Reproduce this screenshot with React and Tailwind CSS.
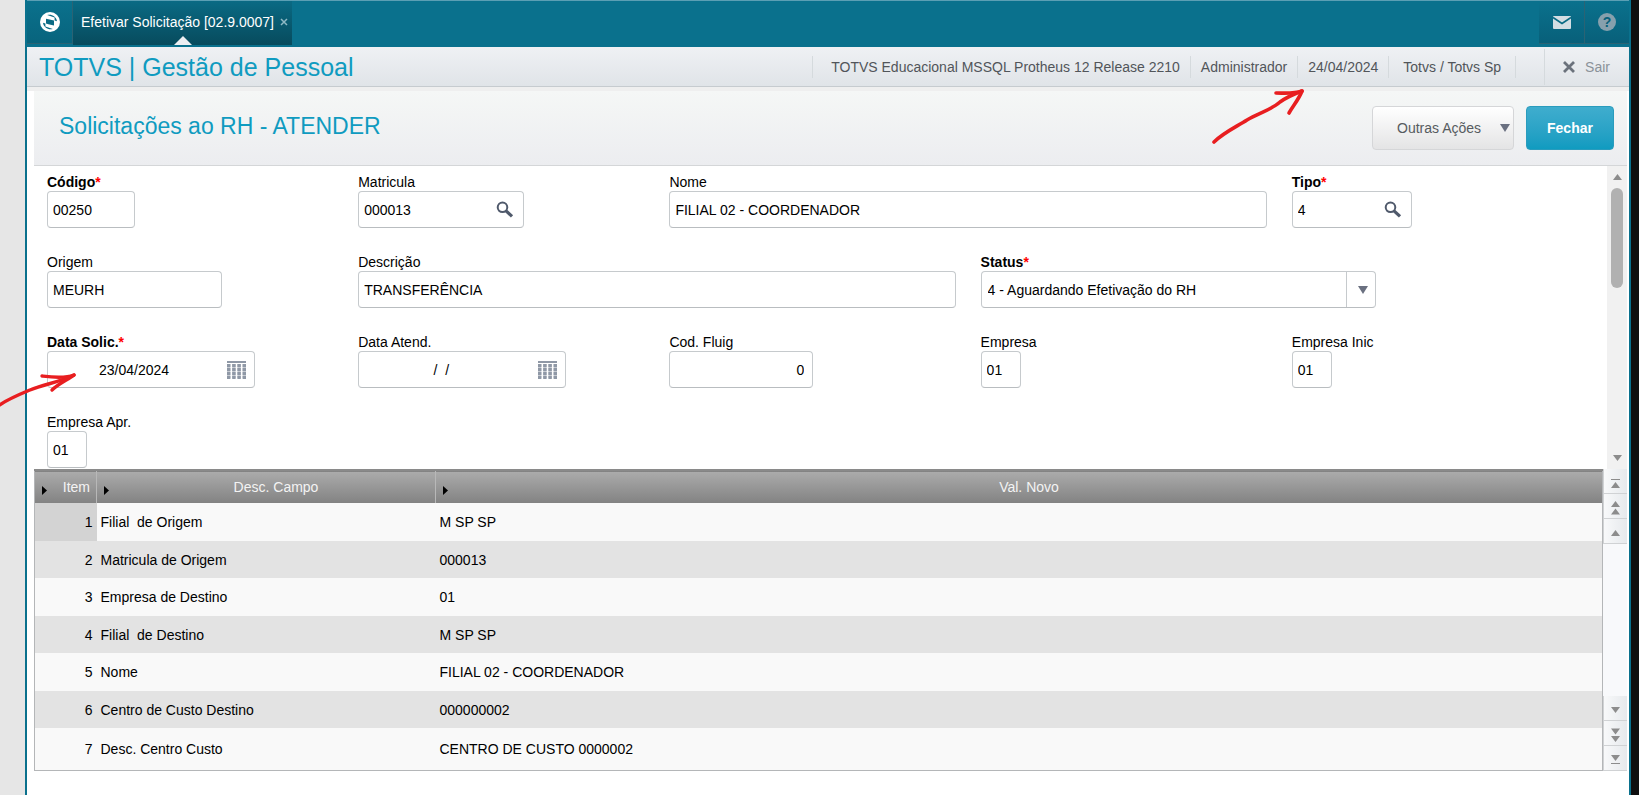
const FONT = "font-['Liberation_Sans',Arial,sans-serif]"

const rows = [
  { item: 1, desc: 'Filial  de Origem', value: 'M SP SP' },
  { item: 2, desc: 'Matricula de Origem', value: '000013' },
  { item: 3, desc: 'Empresa de Destino', value: '01' },
  { item: 4, desc: 'Filial  de Destino', value: 'M SP SP' },
  { item: 5, desc: 'Nome', value: 'FILIAL 02 - COORDENADOR' },
  { item: 6, desc: 'Centro de Custo Destino', value: '000000002' },
  { item: 7, desc: 'Desc. Centro Custo', value: 'CENTRO DE CUSTO 0000002' }
]

function TotvsLogo() {
  return (
    <svg width="20" height="20" viewBox="0 0 20 20" aria-hidden="true">
      <circle cx="10" cy="10" r="10" fill="#fff" />
      <g fill="#0a6a84">
        <path d="M6 6.8 L11.8 8 L14 8.5 V13.4 L8.4 12.2 L6 11.6 Z" />
        <path d="M7.2 3 C11.5 1.8 16.4 4.4 17 9.2 L14.6 8.6 V5.4 Z" />
        <path d="M12.8 17 C8.5 18.2 3.6 15.6 3 10.8 L5.4 11.4 V14.6 Z" />
      </g>
    </svg>
  )
}

function SearchIcon() {
  return (
    <svg width="18" height="18" viewBox="0 0 18 18" fill="none" aria-hidden="true">
      <circle cx="6.5" cy="6.3" r="4.8" stroke="#4f596b" strokeWidth="2" />
      <path d="M10 9.8 L16 15.4" stroke="#4f596b" strokeWidth="3.2" />
    </svg>
  )
}

function CalendarIcon() {
  return (
    <svg width="19" height="18" viewBox="0 0 19 18" fill="#8f98a6" aria-hidden="true">
      <rect x="0" y="0" width="19" height="2" />
      {[0, 1, 2, 3].map(col =>
        [0, 1, 2, 3].map(row => (
          <rect key={`${col}-${row}`} x={col * 5.2} y={3 + row * 4} width="3.4" height="3" />
        ))
      )}
      <path d="M0 3h3.4v14h-3.4z M5.2 3h3.4v14h-3.4z M10.4 3h3.4v14h-3.4z M15.6 3h3.4v14h-3.4z" opacity="0.5" />
    </svg>
  )
}

function Caret({ up, double, bar, large, color = '#8c8c8c' }) {
  const shape = double ? 'M0 6 L4.5 0 L9 6 Z M0 13.5 L4.5 7.5 L9 13.5 Z' : 'M0 6 L4.5 0 L9 6 Z'
  const h = double ? 14 : 6
  return (
    <svg
      width={large ? 10 : 9}
      height={bar ? 9 : large ? 8 : h}
      viewBox={bar ? '0 -3 9 9' : `0 0 9 ${h}`}
      preserveAspectRatio="none"
      fill={color}
      className={up ? 'shrink-0' : 'shrink-0 rotate-180'}
      aria-hidden="true"
    >
      {bar && <path d="M0 -3h9v1h-9z" />}
      <path d={shape} />
    </svg>
  )
}

function Field({ id, label, required, span, width, value, align = 'text-left px-[5px]', icon, action }) {
  return (
    <div className={span ? 'col-span-2' : ''}>
      <label htmlFor={id} className={`block h-4 text-sm leading-[14px] ${required ? 'font-bold' : ''}`}>
        {label}
        {required && <span className="text-[#ff0000]">*</span>}
      </label>
      <div className={`flex h-[37px] rounded border border-[#c6cacd] border-b-[#b9bdc0] bg-white ${width}`}>
        <input
          id={id}
          defaultValue={value}
          className={`w-full min-w-0 bg-transparent text-sm outline-none ${align}`}
        />
        {icon && (
          <button type="button" aria-label={action} className="flex w-[34px] shrink-0 items-center pl-[7px]">
            {icon}
          </button>
        )}
      </div>
    </div>
  )
}

function ScrollButton({ label, children }) {
  return (
    <button
      type="button"
      aria-label={label}
      className="flex h-[25px] w-full items-center justify-center border-b border-l border-[#d0d2d4] bg-linear-to-r from-[#f8f9fa] to-[#e6e9ec] pt-1"
    >
      {children}
    </button>
  )
}

function ColumnMarker() {
  return (
    <svg width="5" height="9" viewBox="0 0 5 9" className="absolute bottom-2 left-[7px]" aria-hidden="true">
      <path d="M0 0 L5 4.5 L0 9 Z" fill="#000" />
    </svg>
  )
}

export default function App() {
  return (
    <div className={`relative flex min-h-screen overflow-hidden bg-[#e6e6e6] pl-[25px] text-black ${FONT}`}>
      <div className="flex min-w-0 flex-1 flex-col border-x-2 border-[#0a718d] bg-white">
        {/* Top bar */}
        <header className="flex h-[47px] justify-between border-t border-[#5b9fb4] bg-[#0a718d]">
          <div className="flex">
            <button type="button" aria-label="Menu" className="mb-[3px] flex w-[46px] items-center justify-center border-r border-b border-[#2a6374] bg-linear-to-b from-[#0a718d] to-[#08647d]">
              <TotvsLogo />
            </button>
            <div className="relative flex h-11 items-center gap-1.5 bg-linear-to-b from-[#0a6a84] to-[#074b5d] pr-1 pl-2 text-sm text-white">
              <span className="pb-0.5">Efetivar Solicitação [02.9.0007]</span>
              <button type="button" aria-label="Fechar aba" className="pb-0.5">
                <svg width="8" height="8" viewBox="0 0 8 8" stroke="#8fb9c5" strokeWidth="1.5" aria-hidden="true">
                  <path d="M1 1 L7 7 M7 1 L1 7" />
                </svg>
              </button>
              <svg width="18" height="9" viewBox="0 0 18 9" className="absolute bottom-0 left-1/2 -translate-x-1/2" aria-hidden="true">
                <path d="M0 9 L9 0 L18 9 Z" fill="#eceff2" />
              </svg>
            </div>
          </div>
          <div className="mb-[3px] flex">
            <button type="button" aria-label="Mensagens" className="flex w-[46px] items-center justify-center border-r border-b border-[#2a6374] bg-linear-to-b from-[#0a718d] to-[#08607a]">
              <svg width="18" height="13" viewBox="0 0 18 13" aria-hidden="true">
                <rect width="18" height="13" rx="1" fill="#d3dde3" />
                <path d="M0 1.5 L9 7.5 L18 1.5" fill="none" stroke="#0a6a84" strokeWidth="1.6" />
              </svg>
            </button>
            <button type="button" aria-label="Ajuda" className="flex w-11 items-center justify-center border-b border-[#2a6374] bg-linear-to-b from-[#0a718d] to-[#08607a]">
              <span className="flex size-[18px] items-center justify-center rounded-full bg-[#86a0ad] text-sm font-bold text-[#08607a]">?</span>
            </button>
          </div>
        </header>

        {/* Environment bar */}
        <div className="flex h-10 items-center justify-between border-b border-[#c6cbcf] bg-linear-to-b from-[#eff1f4] to-[#e0e4e8] pl-3">
          <h1 className="text-[25px] leading-8 text-[#0f9bc0]">TOTVS | Gestão de Pessoal</h1>
          <div className="flex items-center pt-px text-sm leading-[22px] text-[#51555a]">
            <span className="border-l border-[#d5dadd] pr-[10px] pl-[18px]">TOTVS Educacional MSSQL Protheus 12 Release 2210</span>
            <span className="border-l border-[#d5dadd] px-[10px]">Administrador</span>
            <span className="border-l border-[#d5dadd] px-[10px]">24/04/2024</span>
            <span className="border-x border-[#d5dadd] px-[14px]">Totvs / Totvs Sp</span>
            <button type="button" className="ml-7 flex h-9 items-center gap-[10px] border-l border-[#d5dadd] pr-[19px] pl-[18px] text-[#8b9299]">
              <svg width="12" height="12" viewBox="0 0 12 12" stroke="#6b727c" strokeWidth="2.8" aria-hidden="true">
                <path d="M1 1 L11 11 M11 1 L1 11" />
              </svg>
              Sair
            </button>
          </div>
        </div>
        <div className="h-1 bg-[#efefef]" />

        <main className="mr-0.5 ml-[7px]">
          {/* Title and actions */}
          <div className="flex h-[75px] items-center justify-between border-b border-[#d4d6d8] bg-linear-to-b from-[#f5f7f6] to-[#ecedf0] pr-[13px] pl-[25px]">
            <h2 className="pb-1 text-[23px] text-[#0f9bc0]">Solicitações ao RH - ATENDER</h2>
            <div className="flex gap-3">
              <button type="button" className="flex h-11 w-[142px] items-center justify-between rounded border border-[#d5d6d8] bg-linear-to-b from-white to-[#e4e4e5] pr-[3px] pl-6 text-sm text-[#565b60]">
                Outras Ações
                <Caret large color="#6a7080" />
              </button>
              <button type="button" className="h-11 w-[88px] rounded border border-[#2a9cbd] bg-linear-to-b from-[#3fadce] to-[#0f9bc0] text-sm font-bold text-white">
                Fechar
              </button>
            </div>
          </div>

          {/* Form */}
          <div className="flex h-[303px]">
            <form className="grid flex-1 grid-cols-5 content-start gap-y-[27px] pt-[9px] pr-1 pl-[13px]">
              <Field id="codigo" label="Código" required width="w-[88px]" value="00250" />
              <Field id="matricula" label="Matricula" width="w-[166px]" value="000013" icon={<SearchIcon />} action="Pesquisar matricula" />
              <Field id="nome" label="Nome" span width="w-24/25" value="FILIAL 02 - COORDENADOR" />
              <Field id="tipo" label="Tipo" required width="w-[120px]" value="4" icon={<SearchIcon />} action="Pesquisar tipo" />

              <Field id="origem" label="Origem" width="w-[175px]" value="MEURH" />
              <Field id="descricao" label="Descrição" span width="w-24/25" value="TRANSFERÊNCIA" />
              <div className="col-span-2">
                <label htmlFor="status" className="block h-4 text-sm leading-[14px] font-bold">
                  Status<span className="text-[#ff0000]">*</span>
                </label>
                <div className="relative h-[37px] w-[395px] rounded border border-[#c6cacd] border-b-[#b9bdc0] bg-white">
                  <select id="status" className="size-full appearance-none px-1.5 text-sm outline-none">
                    <option>4 - Aguardando Efetivação do RH</option>
                  </select>
                  <span className="pointer-events-none absolute inset-y-0 right-0 flex w-[29px] items-center justify-center border-l border-[#c6cacd] pl-1">
                    <Caret large color="#6a7080" />
                  </span>
                </div>
              </div>

              <Field id="data-solic" label="Data Solic." required width="w-[208px]" value="23/04/2024" align="text-center" icon={<CalendarIcon />} action="Abrir calendário" />
              <Field id="data-atend" label="Data Atend." width="w-[208px]" value="  /  /    " align="text-center" icon={<CalendarIcon />} action="Abrir calendário" />
              <Field id="fluig" label="Cod. Fluig" width="w-36" value="0" align="text-right px-2" />
              <Field id="empresa" label="Empresa" width="w-10" value="01" />
              <Field id="empresa-inic" label="Empresa Inic" width="w-10" value="01" />

              <Field id="empresa-apr" label="Empresa Apr." width="w-10" value="01" />
            </form>
            <div className="flex w-5 flex-col items-center bg-[#f1f1f1] py-2">
              <Caret up />
              <div className="mt-2 h-[100px] w-3 rounded-full bg-[#b1b1b1]" />
              <div className="mt-auto">
                <Caret />
              </div>
            </div>
          </div>

          {/* Items grid */}
          <div className="flex">
            <table className="flex-1 table-fixed border-collapse border-x border-b border-[#b4b6b8] text-sm">
              <colgroup>
                <col className="w-[62px]" />
                <col className="w-[339px]" />
                <col />
              </colgroup>
              <thead>
                <tr className="h-[33px] border-t-2 border-[#8a8a8a] bg-linear-to-b from-[#ababab] to-[#838383] text-[#f3f3f3]">
                  <th className="relative border-r border-[#b8b8b8] pr-1.5 text-right font-normal"><ColumnMarker />Item</th>
                  <th className="relative border-r border-[#b8b8b8] pl-5 font-normal"><ColumnMarker />Desc. Campo</th>
                  <th className="relative pl-5 font-normal"><ColumnMarker />Val. Novo</th>
                </tr>
              </thead>
              <tbody>
                {rows.map(row => (
                  <tr key={row.item} className="odd:h-[38px] odd:bg-[#f9f9f9] even:h-[37px] even:bg-[#e3e3e3] last:h-[42px]!">
                    <td className={`pr-1 text-right ${row.item === 1 ? 'bg-[#d3d3d3]' : ''}`}>{row.item}</td>
                    <td className="pl-1 whitespace-pre">{row.desc}</td>
                    <td className="pl-1">{row.value}</td>
                  </tr>
                ))}
              </tbody>
            </table>
            <div className="flex w-6 flex-col justify-between bg-[#f8f9fb]">
              <div>
                <ScrollButton label="Primeiro"><Caret up bar /></ScrollButton>
                <ScrollButton label="Página anterior"><Caret up double /></ScrollButton>
                <ScrollButton label="Anterior"><Caret up /></ScrollButton>
              </div>
              <div>
                <ScrollButton label="Próximo"><Caret /></ScrollButton>
                <ScrollButton label="Próxima página"><Caret double /></ScrollButton>
                <ScrollButton label="Último"><Caret bar /></ScrollButton>
              </div>
            </div>
          </div>
        </main>
      </div>
      <div className="w-2 bg-[#0f0f0f]" />

      {/* Hand drawn arrows */}
      <svg width="110" height="60" viewBox="0 0 110 60" className="pointer-events-none absolute top-[86px] right-[328px]" fill="none" stroke="#e81e20" strokeWidth="3.6" strokeLinecap="round" strokeLinejoin="round" aria-hidden="true">
        <path d="M13 56 C22 47 35 41 46 34 C58 27 70 24 79 16 C86 11 93 8 101 5" />
        <path d="M75 7 C84 7 93 8 101 5 C98 13 92 20 88 27" />
      </svg>
      <svg width="80" height="40" viewBox="0 0 80 40" className="pointer-events-none absolute top-[370px] left-0" fill="none" stroke="#e81e20" strokeWidth="3.4" strokeLinecap="round" strokeLinejoin="round" aria-hidden="true">
        <path d="M-2 36 C8 29 18 25 30 20 C45 14 60 12 74 5" />
        <path d="M42 6 C50 7 64 9 74 5 C67 10 58 14 52 20" />
      </svg>
    </div>
  )
}
